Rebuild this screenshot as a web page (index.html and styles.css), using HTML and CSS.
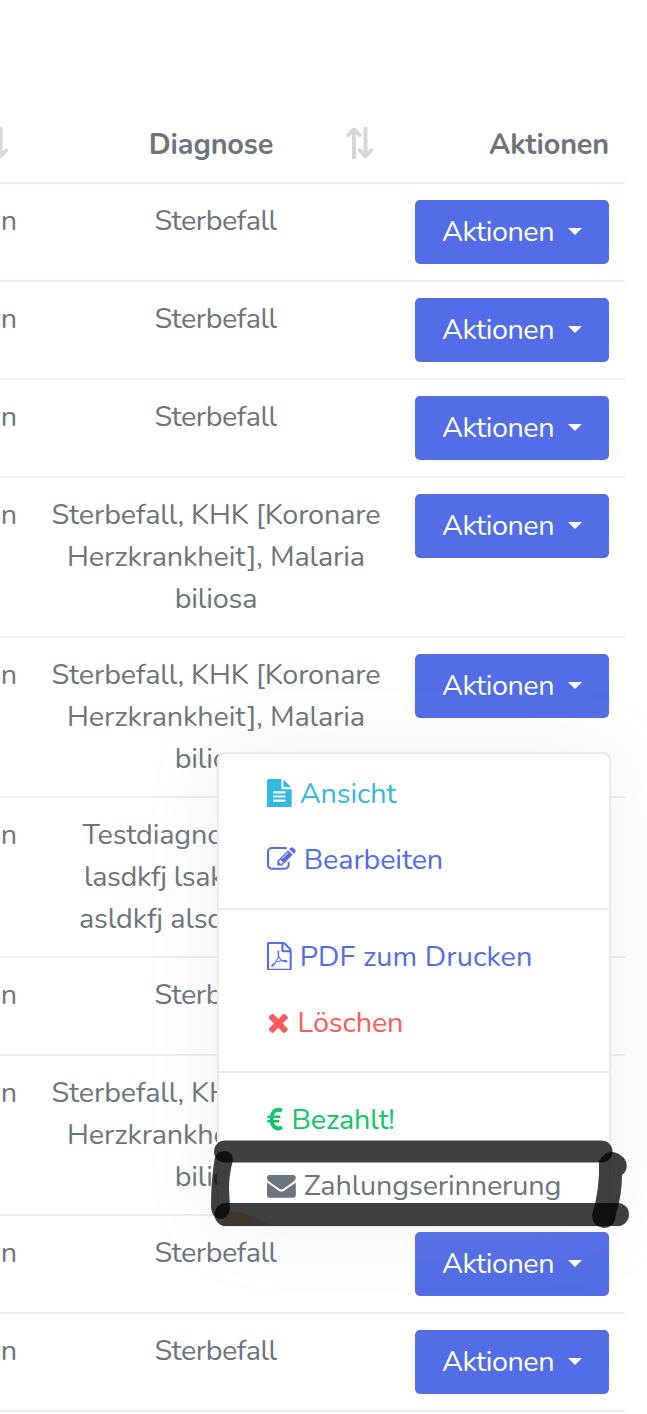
FILE: index.html
```html
<!DOCTYPE html>
<html lang="de">
<head>
<meta charset="utf-8">
<title>Diagnosen</title>
<link rel="stylesheet" href="styles.css">
</head>
<body>
<main class="table">
  <div class="row head">
    <div class="cell name"><svg class="sort" viewBox="0 0 28 32"><path d="M8 30.500V3M2.300 8.200L8 2.500l5.700 5.700M19.500 1.500v27.500M13.800 23.300l5.700 5.700 5.700-5.700"/></svg></div>
    <div class="cell diag">Diagnose<svg class="sort" viewBox="0 0 28 32"><path d="M8 30.500V3M2.300 8.200L8 2.500l5.700 5.700M19.500 1.500v27.500M13.800 23.300l5.700 5.700 5.700-5.700"/></svg></div>
    <div class="cell act">Aktionen</div>
  </div>
  <div class="row"><div class="cell name">n</div><div class="cell diag short">Sterbefall</div><div class="cell act"><button class="btn">Aktionen<i class="caret"></i></button></div></div>
  <div class="row"><div class="cell name">n</div><div class="cell diag short">Sterbefall</div><div class="cell act"><button class="btn">Aktionen<i class="caret"></i></button></div></div>
  <div class="row"><div class="cell name">n</div><div class="cell diag short">Sterbefall</div><div class="cell act"><button class="btn">Aktionen<i class="caret"></i></button></div></div>
  <div class="row"><div class="cell name">n</div><div class="cell diag">Sterbefall, KHK [Koronare<br>Herzkrankheit], Malaria<br>biliosa</div><div class="cell act"><button class="btn">Aktionen<i class="caret"></i></button></div></div>
  <div class="row">
    <div class="cell name">n</div><div class="cell diag">Sterbefall, KHK [Koronare<br>Herzkrankheit], Malaria<br>biliosa</div>
    <div class="cell act"><button class="btn">Aktionen<i class="caret"></i></button>
      <div class="menu">
        <a class="item info"><svg class="ico w-file" viewBox="128 0 1536 1792"><path d="M1596 476q14 14 28 36h-472v-472q22 14 36 28zm-476 164h544v1056q0 40-28 68t-68 28h-1344q-40 0-68-28t-28-68v-1600q0-40 28-68t68-28h800v544q0 40 28 68t68 28zm160 736v-64q0-14-9-23t-23-9h-704q-14 0-23 9t-9 23v64q0 14 9 23t23 9h704q14 0 23-9t9-23zm0-256v-64q0-14-9-23t-23-9h-704q-14 0-23 9t-9 23v64q0 14 9 23t23 9h704q14 0 23-9t9-23zm0-256v-64q0-14-9-23t-23-9h-704q-14 0-23 9t-9 23v64q0 14 9 23t23 9h704q14 0 23-9t9-23z"/></svg><span>Ansicht</span></a>
        <a class="item primary"><svg class="ico" viewBox="0 0 1792 1792"><path d="M888 1184l116-116-152-152-116 116v56h96v96h56zm440-720q-16-16-33 1l-350 350q-17 17-1 33t33-1l350-350q17-17 1-33zm80 594v190q0 119-84.500 203.500t-203.500 84.500h-832q-119 0-203.500-84.500t-84.500-203.500v-832q0-119 84.500-203.500t203.500-84.500h832q63 0 117 25 15 7 18 23 3 17-9 29l-49 49q-14 14-32 8-23-6-45-6h-832q-66 0-113 47t-47 113v832q0 66 47 113t113 47h832q66 0 113-47t47-113v-126q0-13 9-22l64-64q15-15 35-7t20 29zm-96-738l288 288-672 672h-288v-288zm444 132l-92 92-288-288 92-92q28-28 68-28t68 28l152 152q28 28 28 68t-28 68z"/></svg><span>Bearbeiten</span></a>
        <div class="divider"></div>
        <a class="item primary"><svg class="ico w-file" viewBox="128 0 1536 1792"><path d="M1596 380q28 28 48 76t20 88v1152q0 40-28 68t-68 28h-1344q-40 0-68-28t-28-68v-1600q0-40 28-68t68-28h896q40 0 88 20t76 48zm-444-244v376h376q-10-29-22-41l-313-313q-12-12-41-22zm384 1528v-1024h-416q-40 0-68-28t-28-68v-416h-768v1536h1280zm-514-593q33 26 84 56 59-7 117-7 147 0 177 49 16 22 2 52 0 1-1 2l-2 2v1q-6 38-71 38-48 0-115-20t-130-53q-221 24-392 83-153 262-242 262-15 0-28-7l-24-12q-1-1-6-5-10-10-6-36 9-40 56-91.500t132-96.500q14-9 23 6 2 2 2 4 52-85 107-197 68-136 104-262-24-82-30.500-159.500t6.500-127.500q11-40 42-40h22q23 0 35 15 18 21 9 68-2 6-4 8 1 3 1 8v30q-2 123-14 192 55 164 146 238zm-576 411q52-24 137-158-51 40-87.500 84t-49.500 74zm398-920q-15 42-2 132 1-7 7-44 0-3 7-43 1-4 4-8-1-1-1-2-1-2-1-3-1-22-13-36 0 1-1 2v2zm-124 661q135-54 284-81-2-1-13-9.500t-16-13.500q-76-67-127-176-27 86-83 197-30 56-45 83zm646-16q-24-24-140-24 76 28 124 28 14 0 18-1 0-1-2-3z"/></svg><span class="pdf">PDF zum Drucken</span></a>
        <a class="item danger"><svg class="ico w-x" viewBox="192 0 1408 1792"><path d="M1490 1322q0 40-28 68l-136 136q-28 28-68 28t-68-28l-294-294-294 294q-28 28-68 28t-68-28l-136-136q-28-28-28-68t28-68l294-294-294-294q-28-28-28-68t28-68l136-136q28-28 68-28t68 28l294 294 294-294q28-28 68-28t68 28l136 136q28 28 28 68t-28 68l-294 294 294 294q28 28 28 68z"/></svg><span>Löschen</span></a>
        <div class="divider"></div>
        <a class="item success"><svg class="ico w-eur" viewBox="0 0 17 29"><path class="euro" d="M15.400 5.500C9.500 2.600 4.700 6.500 4.700 14.200c0 7.700 5 11.400 11 8.700"/><path class="euro bars" d="M.300 11.800h13.400M.300 16.400h12.400"/></svg><span>Bezahlt!</span></a>
        <a class="item"><svg class="ico" viewBox="0 0 1792 1792"><path d="M1792 710v794q0 66-47 113t-113 47h-1472q-66 0-113-47t-47-113v-794q44 49 101 87 362 246 497 345 57 42 92.500 65.500t94.500 48 110 24.500h2q51 0 110-24.500t94.500-48 92.500-65.500q170-123 498-345 57-39 100-87zm0-294q0 79-49 151t-122 123q-376 261-468 325-10 7-42.500 31t-54 38-52 31.500-57.500 27-50 9h-2q-23 0-50-9t-57.500-27-52-31.500-54-38-42.500-31q-91-64-262-182.500t-205-142.500q-62-42-117-115.500t-55-136.500q0-78 41.500-130t118.500-52h1472q65 0 112.500 47t47.500 113z"/></svg><span>Zahlungserinnerung</span></a>
        <svg class="marker" viewBox="205 1130 430 106">
          <path class="tint" d="M221 1225l8-14q15 1 24 6l20 8z"/>
          <path d="M225 1151.500H601.500" stroke-width="22"/>
          <path d="M226 1214.500H617.500" stroke-width="23"/>
          <path class="fill" d="M215 1157Q218 1151 225 1151Q233 1152 233 1160Q229 1175 229 1188L230 1209Q228 1219 220 1219Q212 1218 211 1208Q211 1178 215 1157Z"/>
          <path class="fill" d="M600 1160Q605 1151 613 1152Q619 1153 624 1158Q629 1165 625 1172L622 1175Q622 1195 616 1214Q615 1228 603 1228Q592 1226 592 1215Q600 1190 599 1160Z"/>
        </svg>
      </div>
    </div>
  </div>
  <div class="row"><div class="cell name">n</div><div class="cell diag"><span class="ln a">Testdiagnose</span><span class="ln b">lasdkfj lsakd</span><span class="ln c">asldkfj alsdk</span></div><div class="cell act"></div></div>
  <div class="row"><div class="cell name">n</div><div class="cell diag short">Sterbefall</div><div class="cell act"></div></div>
  <div class="row"><div class="cell name">n</div><div class="cell diag">Sterbefall, KHK [Koronare<br>Herzkrankheit], Malaria<br>biliosa</div><div class="cell act"></div></div>
  <div class="row"><div class="cell name">n</div><div class="cell diag short">Sterbefall</div><div class="cell act"><button class="btn">Aktionen<i class="caret"></i></button></div></div>
  <div class="row"><div class="cell name">n</div><div class="cell diag short">Sterbefall</div><div class="cell act"><button class="btn">Aktionen<i class="caret"></i></button></div></div>
  <div class="row last"></div>
</main>
</body>
</html>
```

FILE: styles.css
```css
* { box-sizing: border-box; }
body { margin: 0; background: #fff; height: 1414px; overflow: hidden; }
.table { width: 625px; padding-top: 106px; color: #6c757d; font: 400 28.8px/42px Nunito, Lato, sans-serif; letter-spacing: -.15px; }
.row { display: grid; grid-template-columns: 33px 366px 226px; min-height: 98px; border-top: 2px solid #ebeff4; }
.row.last { min-height: 2px; }
.head { min-height: 76px; border-top: 0; font-weight: 700; }
.cell { position: relative; padding: 16px; text-align: center; white-space: nowrap; }
.cell.name { padding-left: 0; text-align: right; }
.cell.diag { padding-left: 0; padding-right: 0; }
.cell.short { padding-right: 1px; letter-spacing: -.5px; }
.cell.act { text-align: right; }
.head .cell { padding-top: 18px; }
.head .cell.diag { padding-right: 10px; }
.sort { position: absolute; right: 25px; top: 21px; width: 28px; height: 32px; fill: none; stroke: #d5d7da; stroke-width: 4; stroke-linecap: round; stroke-linejoin: round; }
.name .sort { right: 24px; }
.btn { display: flex; align-items: center; width: 194px; height: 64px; margin-left: auto; padding: 0 27px; border: 0; border-radius: 5px; background: #536de6; color: #fff; font: inherit; letter-spacing: -.5px; }
.caret { margin: -2px 0 0 auto; border: 7px solid transparent; border-top-color: #fff; border-bottom: 0; }
.menu { position: absolute; z-index: 2; top: 114px; right: 14px; width: 394px; height: 475px; padding-top: 7px; border: 2px solid #e7ebf0; border-radius: 8px; background: #fff; box-shadow: 0 0 70px rgba(154,161,171,.15); text-align: left; }
.item { display: flex; align-items: center; height: 66px; padding-left: 48px; }
.pdf { letter-spacing: .1px; }
.ico { width: 28.8px; height: 28.8px; margin: -2px 8px 0 0; fill: currentColor; }
.w-file { width: 24.700px; }
.w-x { width: 22.600px; }
.w-eur { width: 16.500px; }
.euro { fill: none; stroke: currentColor; stroke-width: 4; }
.bars { stroke-width: 2.600; }
.divider { height: 2px; margin: 15px 0 14px; background: #e7ebf0; }
.info { color: #35b8e0; }
.primary { color: #536de6; }
.danger { color: #ff5b5b; }
.success { color: #10c469; }
.marker { position: absolute; left: -14px; top: 376px; width: 430px; height: 106px; fill: none; stroke: #000; stroke-opacity: .75; stroke-linecap: round; }
.marker .fill { fill: #000; fill-opacity: .75; stroke: none; }
.marker .tint { fill: #f6b221; stroke: none; fill-opacity: .4; }
.ln { display: block; margin: 0 auto; text-align: left; }
.a { width: 267px; }
.b { width: 264px; letter-spacing: -.35px; }
.c { width: 274px; }
```
